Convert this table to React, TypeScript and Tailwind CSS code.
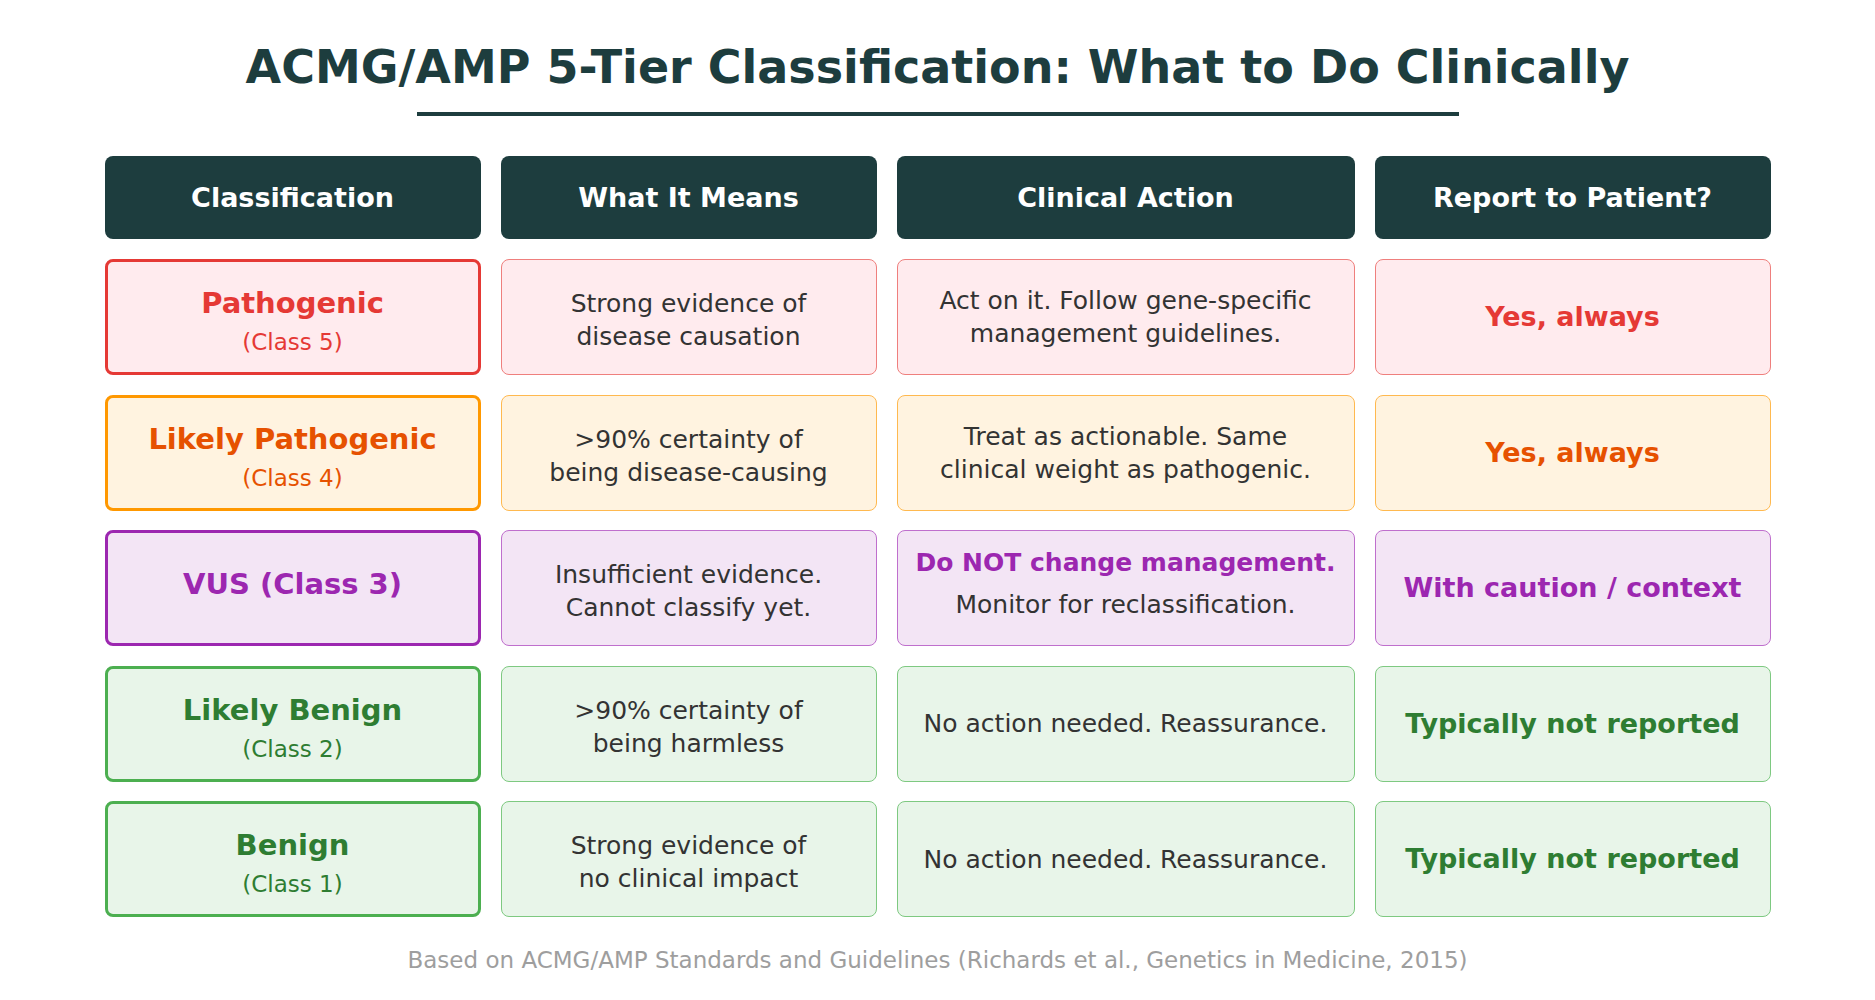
import React from 'react';

type Tier = {
  name: string;
  sub?: string;
  means: string[];
  action: string[];
  actionBold?: string;
  report: string;
  strong: string;
  soft: string;
  bg: string;
  text: string;
};

const tiers: Tier[] = [
  {
    name: 'Pathogenic',
    sub: '(Class 5)',
    means: ['Strong evidence of', 'disease causation'],
    action: ['Act on it. Follow gene-specific', 'management guidelines.'],
    report: 'Yes, always',
    strong: 'border-[#e53935]',
    soft: 'border-[#ef7f7d]',
    bg: 'bg-[#ffebee]',
    text: 'text-[#e53935]',
  },
  {
    name: 'Likely Pathogenic',
    sub: '(Class 4)',
    means: ['>90% certainty of', 'being disease-causing'],
    action: ['Treat as actionable. Same', 'clinical weight as pathogenic.'],
    report: 'Yes, always',
    strong: 'border-[#ff9800]',
    soft: 'border-[#ffb94f]',
    bg: 'bg-[#fff3e0]',
    text: 'text-[#e65100]',
  },
  {
    name: 'VUS (Class 3)',
    means: ['Insufficient evidence.', 'Cannot classify yet.'],
    actionBold: 'Do NOT change management.',
    action: ['Monitor for reclassification.'],
    report: 'With caution / context',
    strong: 'border-[#9c27b0]',
    soft: 'border-[#bf6fcd]',
    bg: 'bg-[#f3e5f5]',
    text: 'text-[#9c27b0]',
  },
  {
    name: 'Likely Benign',
    sub: '(Class 2)',
    means: ['>90% certainty of', 'being harmless'],
    action: ['No action needed. Reassurance.'],
    report: 'Typically not reported',
    strong: 'border-[#4caf50]',
    soft: 'border-[#7ec981]',
    bg: 'bg-[#e8f5e9]',
    text: 'text-[#2e7d32]',
  },
  {
    name: 'Benign',
    sub: '(Class 1)',
    means: ['Strong evidence of', 'no clinical impact'],
    action: ['No action needed. Reassurance.'],
    report: 'Typically not reported',
    strong: 'border-[#4caf50]',
    soft: 'border-[#7ec981]',
    bg: 'bg-[#e8f5e9]',
    text: 'text-[#2e7d32]',
  },
];

const headers = ['Classification', 'What It Means', 'Clinical Action', 'Report to Patient?'];
const cols = 'grid grid-cols-[376px_376px_458px_396px] gap-x-[20px]';

const App = () => {
  return (
    <div
      className="flex h-[1000px] w-[1875px] flex-col items-center bg-white"
      style={{ fontFamily: '"DejaVu Sans", "Noto Sans", sans-serif' }}
    >
      <h1 className="pt-[40px] text-[46px] font-bold leading-[54px] text-[#1d3d3e]">
        ACMG/AMP 5-Tier Classification: What to Do Clinically
      </h1>
      <div className="mt-[18px] h-[4px] w-[1042px] bg-[#1d3d3e]" />

      <div className={`mt-[40px] ${cols}`}>
        {headers.map((h) => (
          <div
            key={h}
            className="flex h-[83px] items-center justify-center rounded-[8px] bg-[#1d3d3e] text-[27px] font-bold leading-[32px] text-white"
          >
            {h}
          </div>
        ))}
      </div>

      <div className="mt-[20px] flex flex-col gap-y-[19.5px]">
        {tiers.map((t) => (
          <div key={t.name} className={cols}>
            <div
              className={`flex h-[116px] flex-col items-center justify-center rounded-[8px] border-[3px] ${t.strong} ${t.bg} ${t.text} ${t.sub ? 'pt-[8px]' : 'pb-[9px]'}`}
            >
              <span className="text-[29px] font-bold leading-[32px]">{t.name}</span>
              {t.sub && <span className="mt-[10px] text-[23px] leading-[26px]">{t.sub}</span>}
            </div>
            <div
              className={`flex h-[116px] flex-col items-center justify-center rounded-[8px] border ${t.soft} ${t.bg} pt-[6px] text-[25px] leading-[33px] text-[#333333]`}
            >
              {t.means.map((l) => (
                <span key={l}>{l}</span>
              ))}
            </div>
            <div
              className={`flex h-[116px] flex-col items-center justify-center rounded-[8px] border ${t.soft} ${t.bg} text-[25px] leading-[33px] text-[#333333] ${t.actionBold ? 'pb-[9px]' : ''}`}
            >
              {t.actionBold && <span className={`mb-[9px] font-bold ${t.text}`}>{t.actionBold}</span>}
              {t.action.map((l) => (
                <span key={l}>{l}</span>
              ))}
            </div>
            <div
              className={`flex h-[116px] items-center justify-center rounded-[8px] border ${t.soft} ${t.bg} text-[27px] font-bold leading-[32px] ${t.text}`}
            >
              {t.report}
            </div>
          </div>
        ))}
      </div>

      <p className="mt-[30px] text-[23px] leading-[27px] text-[#9e9e9e]">
        Based on ACMG/AMP Standards and Guidelines (Richards et al., Genetics in Medicine, 2015)
      </p>
    </div>
  );
};

export default App;
